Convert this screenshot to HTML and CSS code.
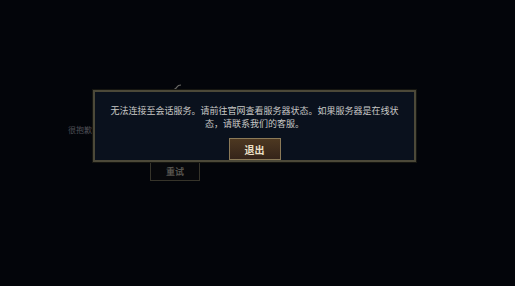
FILE: index.html
```html
<!DOCTYPE html>
<html lang="zh-CN">
<head>
<meta charset="utf-8">
<link rel="stylesheet" href="styles.css">
</head>
<body>
<div class="screen">
  <div class="backdrop">
    <svg class="mark" width="10" height="7" viewBox="0 0 10 7"><path d="M1 6 Q4 5 5 3 Q6 1 9 1" stroke="#6a6a66" stroke-width="1.2" fill="none"/></svg>
    <div class="sorry">很抱歉</div>
    <div class="retry">重试</div>
  </div>
  <div class="dialog">
    <p class="message">无法连接至会话服务。请前往官网查看服务器状态。如果服务器是在线状态，请联系我们的客服。</p>
    <button class="quit">退出</button>
  </div>
</div>
</body>
</html>
```
FILE: styles.css
```css
html, body {
  margin: 0;
  padding: 0;
  background: #03050a;
}
.screen {
  position: relative;
  width: 515px;
  height: 286px;
  overflow: hidden;
  background: #03050a;
  font-family: "Noto Sans CJK SC", "Noto Sans", sans-serif;
}
.backdrop {
  display: flex;
  flex-direction: column;
  align-items: flex-start;
  padding: 84px 0 0 68px;
}
.mark {
  margin-left: 104px;
  display: block;
}
.sorry {
  margin-top: 33px;
  font-size: 8px;
  line-height: 12px;
  color: #4e4f55;
}
.retry {
  margin-top: 25px;
  margin-left: 82px;
  width: 50px;
  height: 20px;
  box-sizing: border-box;
  border: 1px solid #36342a;
  display: flex;
  align-items: center;
  justify-content: center;
  font-size: 9px;
  font-weight: bold;
  color: #55534e;
  background: #07080b;
}
.dialog {
  position: absolute;
  left: 93px;
  top: 90px;
  width: 323px;
  height: 72px;
  box-sizing: border-box;
  border: 2px solid #4c4939;
  background: #0a111d;
  display: flex;
  flex-direction: column;
  align-items: center;
  box-shadow: 0 0 0 1px #161611;
}
.message {
  margin: 0;
  padding-top: 12px;
  width: 292px;
  font-size: 9px;
  line-height: 13px;
  text-align: center;
  color: #c8c8c6;
}
.quit {
  margin-top: auto;
  width: 52px;
  height: 22px;
  box-sizing: border-box;
  border: 1px solid #8b7a58;
  background: linear-gradient(#4d3821, #35241a);
  color: #ece0c8;
  font-family: "Noto Sans CJK SC", sans-serif;
  font-size: 10px;
  font-weight: bold;
  padding: 0;
}
```
